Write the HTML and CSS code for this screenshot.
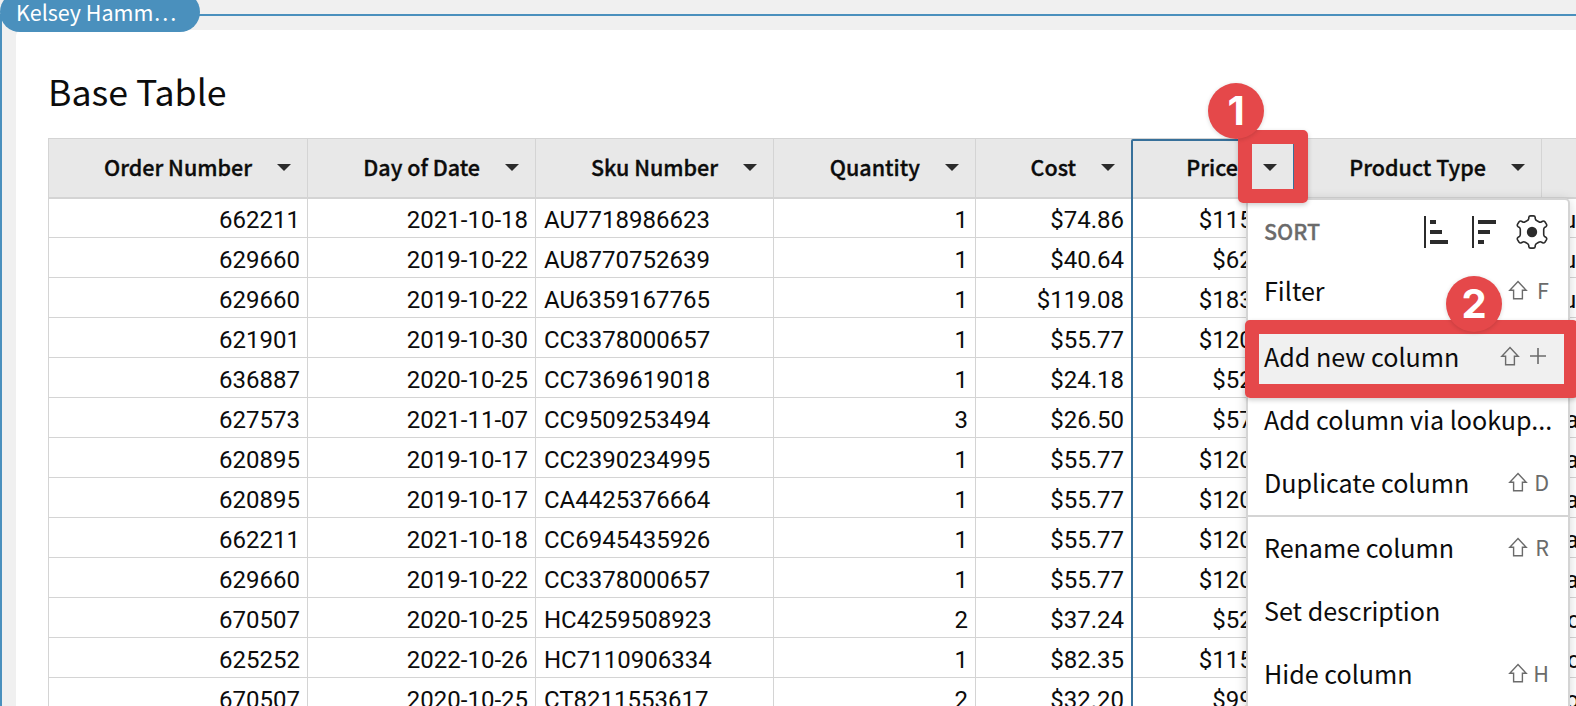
FILE: index.html
```html
<!DOCTYPE html>
<html lang="en">
<head>
<meta charset="utf-8">
<title>Base Table</title>
<link rel="stylesheet" href="styles.css">
</head>
<body>
<svg class="defs" width="0" height="0" aria-hidden="true">
  <symbol id="caret" viewBox="0 0 14 7"><path d="M0 0h14L7 7z" fill="#2b2b2b"/></symbol>
  <symbol id="shift" viewBox="0 0 20 20"><path d="M10 1.6 18.2 10.2H14.4V18.8H5.6V10.2H1.8Z" fill="none" stroke="#6b6b6b" stroke-width="1.4"/></symbol>
</svg>
<div class="canvas">
  <div class="selection"></div>
  <div class="user-tag">Kelsey Hamm<span class="dots">…</span></div>
  <main class="card">
    <h1 class="title">Base Table</h1>
    <table class="grid">
      <colgroup><col class="c-order"><col class="c-date"><col class="c-sku"><col class="c-qty"><col class="c-cost"><col class="c-price"><col class="c-type"><col class="c-next"></colgroup>
      <thead><tr>
        <th><span class="head">Order Number<svg class="caret"><use href="#caret"/></svg></span></th>
        <th><span class="head">Day of Date<svg class="caret"><use href="#caret"/></svg></span></th>
        <th><span class="head">Sku Number<svg class="caret"><use href="#caret"/></svg></span></th>
        <th><span class="head">Quantity<svg class="caret"><use href="#caret"/></svg></span></th>
        <th class="cost"><span class="head">Cost<svg class="caret"><use href="#caret"/></svg></span></th>
        <th><span class="head">Price<svg class="caret"><use href="#caret"/></svg></span></th>
        <th><span class="head">Product Type<svg class="caret"><use href="#caret"/></svg></span></th>
        <th></th>
      </tr></thead>
      <tbody>
        <tr><td>662211</td><td>2021-10-18</td><td class="left">AU7718986623</td><td>1</td><td class="cost">$74.86</td><td>$115.17</td><td></td><td class="left">Fu</td></tr>
        <tr><td>629660</td><td>2019-10-22</td><td class="left">AU8770752639</td><td>1</td><td class="cost">$40.64</td><td>$62.52</td><td></td><td class="left">Fu</td></tr>
        <tr><td>629660</td><td>2019-10-22</td><td class="left">AU6359167765</td><td>1</td><td class="cost">$119.08</td><td>$183.20</td><td></td><td class="left">Fu</td></tr>
        <tr><td>621901</td><td>2019-10-30</td><td class="left">CC3378000657</td><td>1</td><td class="cost">$55.77</td><td>$120.00</td><td></td><td class="left">Ca</td></tr>
        <tr><td>636887</td><td>2020-10-25</td><td class="left">CC7369619018</td><td>1</td><td class="cost">$24.18</td><td>$52.00</td><td></td><td class="left">Ca</td></tr>
        <tr><td>627573</td><td>2021-11-07</td><td class="left">CC9509253494</td><td>3</td><td class="cost">$26.50</td><td>$57.00</td><td></td><td class="left">Ca</td></tr>
        <tr><td>620895</td><td>2019-10-17</td><td class="left">CC2390234995</td><td>1</td><td class="cost">$55.77</td><td>$120.00</td><td></td><td class="left">Ca</td></tr>
        <tr><td>620895</td><td>2019-10-17</td><td class="left">CA4425376664</td><td>1</td><td class="cost">$55.77</td><td>$120.00</td><td></td><td class="left">Ca</td></tr>
        <tr><td>662211</td><td>2021-10-18</td><td class="left">CC6945435926</td><td>1</td><td class="cost">$55.77</td><td>$120.00</td><td></td><td class="left">Ca</td></tr>
        <tr><td>629660</td><td>2019-10-22</td><td class="left">CC3378000657</td><td>1</td><td class="cost">$55.77</td><td>$120.00</td><td></td><td class="left">Ca</td></tr>
        <tr><td>670507</td><td>2020-10-25</td><td class="left">HC4259508923</td><td>2</td><td class="cost">$37.24</td><td>$52.00</td><td></td><td class="left">Ho</td></tr>
        <tr><td>625252</td><td>2022-10-26</td><td class="left">HC7110906334</td><td>1</td><td class="cost">$82.35</td><td>$115.00</td><td></td><td class="left">Ho</td></tr>
        <tr><td>670507</td><td>2020-10-25</td><td class="left">CT8211553617</td><td>2</td><td class="cost">$32.20</td><td>$99.00</td><td></td><td class="left">Co</td></tr>
      </tbody>
    </table>
  </main>
  <div class="column-outline"></div>
  <nav class="menu">
    <div class="sort">
      <span class="sort-label">SORT</span>
      <svg class="ico-sort" width="24" height="32" viewBox="0 0 24 32" fill="#2b2b2b"><path d="M0 0h2v32H0zM6 4h6v4H6zM6 14h12v4H6zM6 24h18v4H6z"/></svg>
      <svg class="ico-sort" width="24" height="32" viewBox="0 0 24 32" fill="#2b2b2b"><path d="M0 0h2v32H0zM6 4h18v4H6zM6 14h12v4H6zM6 24h6v4H6z"/></svg>
      <svg class="ico-gear" width="32" height="34" viewBox="-16 -17 32 34"><path d="M-3.2-13.6V-14.6Q-3-16.1-1.4-16.1H1.4Q3-16.1 3.2-14.6V-13.6Q3.4-11.8 5-11.2L6.8-10.2Q8.2-9.4 9.6-10.2L10.6-10.8Q12-11.4 12.9-10.2L14.4-7.8Q15.2-6.4 14-5.4L13-4.8Q11.6-3.8 11.7-2.2V2.2Q11.6 3.8 13 4.8L14 5.4Q15.2 6.4 14.4 7.8L12.9 10.2Q12 11.4 10.6 10.8L9.6 10.2Q8.2 9.4 6.8 10.2L5 11.2Q3.4 11.8 3.2 13.6V14.6Q3 16.1 1.4 16.1H-1.4Q-3 16.1-3.2 14.6V13.6Q-3.4 11.8-5 11.2L-6.8 10.2Q-8.2 9.4-9.6 10.2L-10.6 10.8Q-12 11.4-12.9 10.2L-14.4 7.8Q-15.2 6.4-14 5.4L-13 4.8Q-11.6 3.8-11.7 2.2V-2.2Q-11.6-3.8-13-4.8L-14-5.4Q-15.2-6.4-14.4-7.8L-12.9-10.2Q-12-11.4-10.6-10.8L-9.6-10.2Q-8.2-9.4-6.8-10.2L-5-11.2Q-3.4-11.8-3.2-13.6Z" fill="none" stroke="#2b2b2b" stroke-width="1.6"/><circle r="5.2" fill="#2b2b2b"/></svg>
    </div>
    <div class="item"><span class="name">Filter</span><svg class="shift"><use href="#shift"/></svg><kbd>F</kbd></div>
    <div class="item active"><span class="name">Add new column</span><svg class="shift"><use href="#shift"/></svg><svg class="plus" width="16" height="16" viewBox="0 0 16 16"><path d="M8 0v16M0 8h16" stroke="#6b6b6b" stroke-width="1.6"/></svg></div>
    <div class="item"><span class="name">Add column via lookup...</span></div>
    <div class="item"><span class="name">Duplicate column</span><svg class="shift"><use href="#shift"/></svg><kbd>D</kbd></div>
    <div class="rule"></div>
    <div class="item"><span class="name">Rename column</span><svg class="shift"><use href="#shift"/></svg><kbd>R</kbd></div>
    <div class="item"><span class="name">Set description</span></div>
    <div class="item"><span class="name">Hide column</span><svg class="shift"><use href="#shift"/></svg><kbd>H</kbd></div>
  </nav>
  <div class="frame frame-one"></div>
  <div class="frame frame-two"></div>
  <div class="badge badge-one">1</div>
  <div class="badge badge-two">2</div>
</div>
</body>
</html>
```

FILE: styles.css
```css
* { box-sizing: border-box; }
body { margin: 0; overflow: hidden; }
.defs { position: absolute; }
.canvas {
  position: relative;
  width: 1576px;
  height: 706px;
  padding: 30px 0 0 16px;
  overflow: hidden;
  background: #f0f0f0;
  color: #0c0c0c;
  font-family: "Noto Sans CJK SC", "Noto Sans", sans-serif;
}
.selection {
  position: absolute;
  inset: 14px -10px -10px 0;
  border: 2px solid #4a90bd;
}
.user-tag {
  position: absolute;
  z-index: 1;
  left: 0;
  top: -8px;
  width: 200px;
  height: 40px;
  padding-left: 16px;
  border-radius: 20px;
  background: #4a90bd;
  color: #fff;
  font-size: 21.5px;
  line-height: 39px;
  white-space: nowrap;
}
.dots { letter-spacing: 0; }
.card {
  position: relative;
  width: 1600px;
  height: 720px;
  padding: 38px 0 0 32px;
  border-radius: 6px;
  background: #fff;
}
.title {
  height: 70px;
  margin: 0;
  font-size: 35.7px;
  font-weight: 400;
  line-height: 45px;
}
.grid {
  width: 1702px;
  table-layout: fixed;
  border-collapse: separate;
  border-spacing: 0;
  border-left: 1px solid #d4d4d4;
  font-family: Roboto, sans-serif;
  font-size: 24px;
}
.c-order { width: 259px; }
.c-date { width: 228px; }
.c-sku { width: 238px; }
.c-qty { width: 202px; }
.c-cost { width: 157px; }
.c-price { width: 161px; }
.c-type { width: 248px; }
.c-next { width: 208px; }
.grid th {
  height: 61px;
  padding: 0 16px 2px 0;
  border: solid #d4d4d4;
  border-width: 1px 1px 2px 0;
  background: #e8e8e8;
}
.grid th.cost { padding-right: 17px; }
.head {
  display: flex;
  align-items: center;
  justify-content: flex-end;
  gap: 25px;
  font: 500 21.5px/32px "Noto Sans CJK SC", "Noto Sans", sans-serif;
  -webkit-text-stroke: .35px #0c0c0c;
  white-space: nowrap;
}
.caret { width: 14px; height: 7px; }
.grid td {
  height: 40px;
  padding: 5px 7px 0 8px;
  border: solid #d4d4d4;
  border-width: 0 1px 1px 0;
  line-height: 32px;
  text-align: right;
  white-space: nowrap;
}
.grid tbody tr:first-child td { height: 39px; padding-top: 4px; }
.grid td.cost { padding-right: 8px; }
.grid .left { text-align: left; }
.column-outline {
  position: absolute;
  left: 1131px;
  top: 139px;
  width: 164px;
  height: 600px;
  border: 2px solid #37709a;
  border-radius: 2px;
}
.menu {
  position: absolute;
  left: 1246px;
  top: 198px;
  width: 324px;
  height: 560px;
  border: 2px solid #d4d4d4;
  border-radius: 5px;
  background: #fff;
  box-shadow: 0 2px 12px rgba(0, 0, 0, .16);
}
.sort {
  display: flex;
  align-items: center;
  height: 60px;
  padding: 4px 20px 0 16px;
}
.sort-label {
  flex: 1;
  margin-top: -3px;
  color: #6b6b6b;
  font-size: 21.5px;
  font-weight: 500;
  -webkit-text-stroke: .3px #6b6b6b;
}
.ico-sort { margin-right: 24px; }
.ico-gear { margin-left: -4px; }
.item {
  display: flex;
  align-items: center;
  height: 63px;
  padding: 0 19px 4px 16px;
  font-size: 25.1px;
  line-height: 40px;
  white-space: nowrap;
}
.name { flex: 1; }
.active { margin-top: 3px; background: #f0f0f0; }
.shift { width: 20px; height: 20px; margin-right: -1px; }
.active .shift { margin-right: 0; }
.plus { margin: 0 3px 0 10px; }
kbd {
  width: 22px;
  color: #6b6b6b;
  font: 21.6px/32px "Noto Sans CJK SC", sans-serif;
  text-align: right;
}
.rule { height: 2px; background: #d4d4d4; }
.frame {
  position: absolute;
  border: 14px solid #e5484a;
  border-radius: 5px;
  box-shadow: 0 2px 5px rgba(0, 0, 0, .2);
}
.frame-one { left: 1238px; top: 130px; width: 70px; height: 73px; }
.frame-two { left: 1245px; top: 320px; width: 333px; height: 78px; }
.badge {
  position: absolute;
  width: 56px;
  height: 56px;
  border-radius: 50%;
  background: #e5484a;
  box-shadow: 0 1px 4px rgba(0, 0, 0, .15);
  color: #fff;
  font: 700 40px/56px Inter, sans-serif;
  text-align: center;
}
.badge-one { left: 1208px; top: 83px; }
.badge-two { left: 1446px; top: 276px; }
```
